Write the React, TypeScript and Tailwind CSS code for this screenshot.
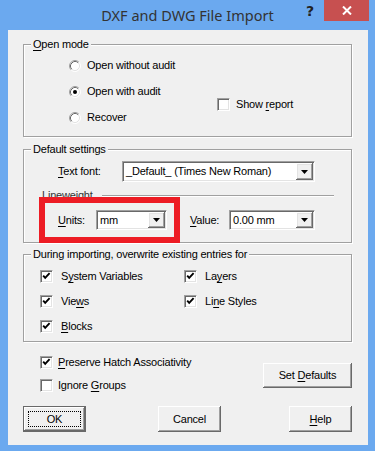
import React from 'react';

const U = ({ children }: { children: React.ReactNode }) => (
  <span className="underline underline-offset-[2px] decoration-[1px]">{children}</span>
);

const Radio = ({ checked }: { checked?: boolean }) => (
  <svg width="12" height="12" viewBox="0 0 12 12" className="shrink-0">
    <circle cx="6" cy="6" r="5" fill="#fff" />
    <path d="M2.11 9.89 A5.5 5.5 0 0 1 9.89 2.11" stroke="#a0a0a0" fill="none" />
    <path d="M9.89 2.11 A5.5 5.5 0 0 1 2.11 9.89" stroke="#fff" fill="none" />
    <path d="M2.82 9.18 A4.5 4.5 0 0 1 9.18 2.82" stroke="#696969" fill="none" />
    <path d="M9.18 2.82 A4.5 4.5 0 0 1 2.82 9.18" stroke="#e3e3e3" fill="none" />
    {checked && <circle cx="6" cy="6" r="2" fill="#000" />}
  </svg>
);

const Check = ({ checked }: { checked?: boolean }) => (
  <div className="relative w-[13px] h-[13px] shrink-0 bg-white border border-t-[#a0a0a0] border-l-[#a0a0a0] border-r-white border-b-white shadow-[inset_1px_1px_0_#696969,inset_-1px_-1px_0_#e3e3e3]">
    {checked && (
      <svg width="11" height="11" viewBox="0 0 11 11" className="absolute left-0 top-0">
        <polyline points="2.2,4.6 4.2,6.8 8.6,2.2" fill="none" stroke="#000" strokeWidth="1.9" />
      </svg>
    )}
  </div>
);

const Combo = ({ value, className }: { value: string; className: string }) => (
  <div className={`flex bg-white border border-t-[#a0a0a0] border-l-[#a0a0a0] border-r-white border-b-white shadow-[inset_1px_1px_0_#696969,inset_-1px_-1px_0_#e3e3e3] p-[1px] ${className}`}>
    <div className="flex-1 flex items-center pl-[2px] whitespace-nowrap overflow-hidden">{value}</div>
    <div className="w-[17px] flex items-center justify-center bg-[#f0f0f0] shadow-[inset_-1px_-1px_0_#696969,inset_1px_1px_0_#fff,inset_-2px_-2px_0_#a0a0a0,inset_2px_2px_0_#e3e3e3]">
      <svg width="7" height="4" viewBox="0 0 7 4">
        <polygon points="0,0 7,0 3.5,4" fill="#000" />
      </svg>
    </div>
  </div>
);

const Btn = ({ children, className = '', isDefault }: { children: React.ReactNode; className?: string; isDefault?: boolean }) => (
  <div className={`${isDefault ? 'border border-[#696969]' : ''} ${className}`}>
    <div className="w-full h-full flex items-center justify-center bg-[#f0f0f0] shadow-[inset_-1px_-1px_0_#696969,inset_1px_1px_0_#fff,inset_-2px_-2px_0_#a0a0a0]">
      {isDefault ? (
        <div className="w-[calc(100%-8px)] h-[calc(100%-8px)] flex items-center justify-center border border-dotted border-black">
          <span>{children}</span>
        </div>
      ) : (
        <span className="whitespace-pre">{children}</span>
      )}
    </div>
  </div>
);

const Group = ({ label, className, children }: { label: React.ReactNode; className: string; children?: React.ReactNode }) => (
  <div className={`relative w-[329px] border border-[#a0a0a0] shadow-[inset_1px_1px_0_#fff,1px_1px_0_#fff] ${className}`}>
    <span className="absolute left-[7px] -top-[8px] px-[2px] bg-[#f0f0f0] leading-[14px] whitespace-nowrap">{label}</span>
    {children}
  </div>
);

export default function App() {
  return (
    <div className="w-[375px] h-[451px] bg-[#6ba9ef] flex flex-col font-['Liberation_Sans',Arial,sans-serif] text-[11px] tracking-[-0.2px] text-black">
      {/* Title bar */}
      <div className="h-[30px] grid grid-cols-[1fr_auto_1fr] shrink-0">
        <div />
        <div className="font-['Noto_Sans',sans-serif] text-[14.5px] leading-[30px] tracking-normal text-[#333]">DXF and DWG File Import</div>
        <div className="flex justify-end items-start">
          <span className="font-['DejaVu_Sans',sans-serif] font-bold text-[14px] leading-[20px] mt-[1px] mr-[10px] text-[#222] tracking-normal">?</span>
          <div className="w-[45px] h-[21px] mr-[6px] bg-[#c75050] flex items-center justify-center">
            <svg width="10" height="9" viewBox="0 0 10 9">
              <path d="M1 0.5 L9 8.5 M9 0.5 L1 8.5" stroke="#fff" strokeWidth="2" />
            </svg>
          </div>
        </div>
      </div>

      {/* Client area */}
      <div className="ml-[8px] w-[360px] h-[415px] bg-[#f0f0f0] pl-[15px] pr-[16px] pt-[14px] flex flex-col">
        <Group label={<><U>O</U>pen mode</>} className="h-[93px] flex pt-[14px]">
          <div className="w-[193px] pl-[45px] flex flex-col gap-[13px] shrink-0 whitespace-nowrap">
            <div className="h-[13px] flex items-center gap-[6px]"><Radio /><span>Open without audit</span></div>
            <div className="h-[13px] flex items-center gap-[6px]"><Radio checked /><span>Open with audit</span></div>
            <div className="h-[13px] flex items-center gap-[6px]"><Radio /><span>Recover</span></div>
          </div>
          <div className="pt-[39px] whitespace-nowrap">
            <div className="h-[13px] flex items-center gap-[6px]"><Check /><span>Show <U>r</U>eport</span></div>
          </div>
        </Group>

        <Group label="Default settings" className="mt-[12px] h-[94px] pt-[11px]">
          <div className="flex items-center pl-[34px]">
            <span className="w-[64px]"><U>T</U>ext font:</span>
            <Combo value="_Default_ (Times New Roman)" className="w-[193px] h-[21px]" />
          </div>
          <div className="mt-[7px] h-[13px] flex items-center pl-[18px] pr-[17px]">
            <span className="text-[#333]">Lineweight</span>
            <div className="flex-1 ml-[9px] h-px bg-[#a0a0a0] shadow-[0_1px_0_#fff]" />
          </div>
          <div className="mt-[8px] flex items-center pl-[34px]">
            <span className="w-[38px]"><U>U</U>nits:</span>
            <Combo value="mm" className="w-[71px] h-[20px]" />
            <span className="ml-[23px] w-[39px]"><U>V</U>alue:</span>
            <Combo value="0.00 mm" className="w-[86px] h-[20px]" />
          </div>
          {/* red highlight annotation */}
          <div className="absolute left-[15px] top-[47px] w-[141px] h-[46px] border-[6px] border-[#ed1c24]" />
        </Group>

        <Group label="During importing, overwrite existing entries for" className="mt-[11px] h-[88px] pt-[15px] pl-[16px]">
          <div className="grid grid-cols-[144px_1fr] gap-y-[12px]">
            <div className="h-[13px] flex items-center gap-[8px]"><Check checked /><span>S<U>y</U>stem Variables</span></div>
            <div className="h-[13px] flex items-center gap-[8px]"><Check checked /><span>La<U>y</U>ers</span></div>
            <div className="h-[13px] flex items-center gap-[8px]"><Check checked /><span>Vie<U>w</U>s</span></div>
            <div className="h-[13px] flex items-center gap-[8px]"><Check checked /><span>Li<U>n</U>e Styles</span></div>
            <div className="h-[13px] flex items-center gap-[8px]"><Check checked /><span><U>B</U>locks</span></div>
          </div>
        </Group>

        <div className="mt-[14px] flex">
          <div className="pl-[17px] flex flex-col gap-[10px]">
            <div className="h-[13px] flex items-center gap-[5px]"><Check checked /><span><U>P</U>reserve Hatch Associativity</span></div>
            <div className="h-[13px] flex items-center gap-[5px]"><Check /><span>Ignore <U>G</U>roups</span></div>
          </div>
          <Btn className="ml-auto mt-[7px] w-[89px] h-[25px]">Set <U>D</U>efaults</Btn>
        </div>

        <div className="mt-[14px] flex">
          <Btn isDefault className="w-[63px] h-[26px]">OK</Btn>
          <Btn className="ml-[72px] w-[63px] h-[26px]">Cancel</Btn>
          <Btn className="ml-auto w-[63px] h-[26px]"><U>H</U>elp</Btn>
        </div>
      </div>
    </div>
  );
}
